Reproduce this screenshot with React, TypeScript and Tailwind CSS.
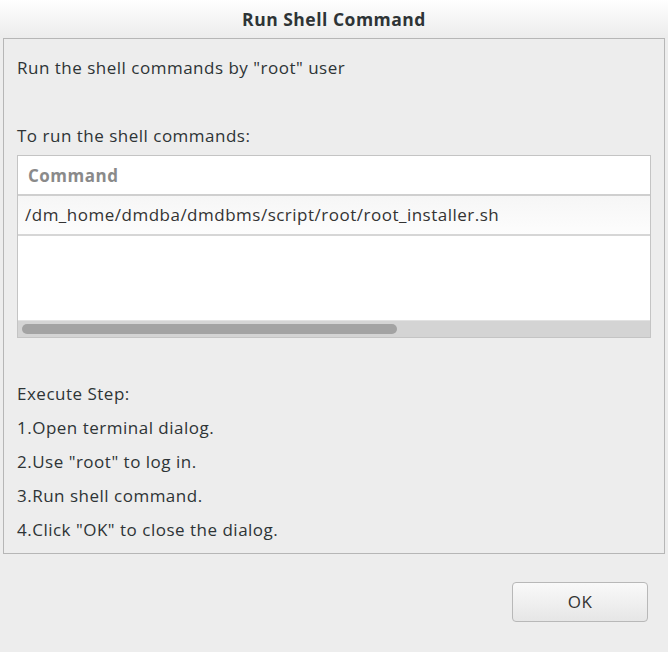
const steps = [
    "1.Open terminal dialog.",
    "2.Use \"root\" to log in.",
    "3.Run shell command.",
    "4.Click \"OK\" to close the dialog.",
];

const App = () => {
    return (
        <div
            className="w-[668px] h-[652px] bg-[#ededed] text-[#2e3436] flex flex-col overflow-hidden tracking-[0.5px]"
            style={{ fontFamily: '"Open Sans", "DejaVu Sans", sans-serif' }}
        >
            <div className="h-[38px] shrink-0 flex items-center justify-center bg-gradient-to-b from-white to-[#ececec]">
                <h1 className="text-[17.5px] font-bold text-[#2e3436]">
                    Run Shell Command
                </h1>
            </div>
            <div className="mx-[3px] h-[516px] border border-[#b6b6b6] bg-[#ededed] px-[13px] flex flex-col">
                <p className="text-[17px] mt-[18px] leading-[22px]">
                    Run the shell commands by "root" user
                </p>
                <p className="text-[17px] mt-[46px] leading-[22px]">
                    To run the shell commands:
                </p>
                <div className="mt-[8px] w-[634px] h-[183px] border border-[#c4c4c4] bg-white flex flex-col">
                    <div className="h-[40px] shrink-0 flex items-center px-[10px] pt-[2px] border-b-2 border-[#cfcfcf]">
                        <span className="text-[17px] font-bold text-[#8a8a8a]">
                            Command
                        </span>
                    </div>
                    <div className="h-[40px] shrink-0 flex items-center px-[7px] border-b-2 border-[#d6d6d6] bg-gradient-to-b from-[#f6f6f6] to-[#fdfdfd]">
                        <span className="text-[17px] text-[#333]">
                            /dm_home/dmdba/dmdbms/script/root/root_installer.sh
                        </span>
                    </div>
                    <div className="flex-1" />
                    <div className="h-[17px] shrink-0 bg-[#d4d4d4] flex items-center px-[4px] border-t border-[#e2e2e2]">
                        <div className="h-[10px] w-[375px] rounded-full bg-[#a3a3a3]" />
                    </div>
                </div>
                <div className="mt-[45px] flex flex-col gap-[12px] text-[17px] leading-[22px]">
                    <p>Execute Step:</p>
                    {steps.map((step, idx) => (
                        <p key={idx}>{step}</p>
                    ))}
                </div>
            </div>
            <div className="flex justify-end pr-[20px] pt-[28px]">
                <button className="w-[136px] h-[40px] rounded-[4px] border border-[#b8b8b8] bg-gradient-to-b from-[#f9f9f9] to-[#e6e6e6] text-[17px] text-[#333]">
                    OK
                </button>
            </div>
        </div>
    );
};

export default App;
